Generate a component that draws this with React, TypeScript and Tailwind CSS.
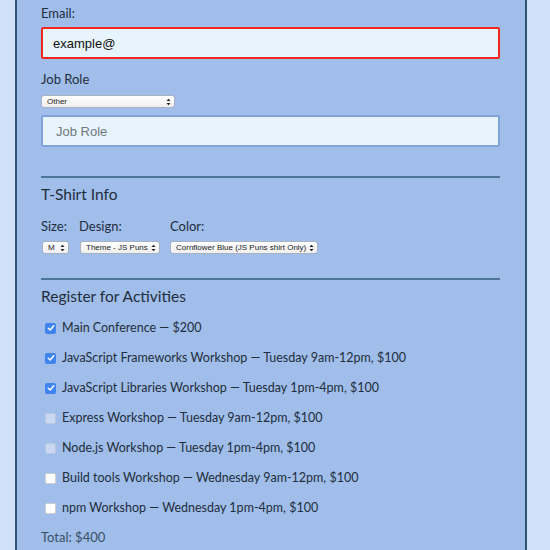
import { useState } from "react";

type Activity = {
  name: string;
  checked: boolean;
  disabled: boolean;
};

const activities: Activity[] = [
  { name: "Main Conference — $200", checked: true, disabled: false },
  { name: "JavaScript Frameworks Workshop — Tuesday 9am-12pm, $100", checked: true, disabled: false },
  { name: "JavaScript Libraries Workshop — Tuesday 1pm-4pm, $100", checked: true, disabled: false },
  { name: "Express Workshop — Tuesday 9am-12pm, $100", checked: false, disabled: true },
  { name: "Node.js Workshop — Tuesday 1pm-4pm, $100", checked: false, disabled: true },
  { name: "Build tools Workshop — Wednesday 9am-12pm, $100", checked: false, disabled: false },
  { name: "npm Workshop — Wednesday 1pm-4pm, $100", checked: false, disabled: false },
];

// little mac-style up/down arrows on the fake selects
const UpDown = () => (
  <svg width="5" height="8" viewBox="0 0 5 8" className="shrink-0">
    <path d="M0.5 3 L2.5 0.8 L4.5 3 Z" fill="#222" />
    <path d="M0.5 5 L2.5 7.2 L4.5 5 Z" fill="#222" />
  </svg>
);

const FakeSelect = ({ value, width }: { value: string; width: string }) => (
  <div
    className={`${width} h-[13px] flex items-center justify-between gap-[2px] pl-[5px] pr-[3px] bg-gradient-to-b from-white to-[#efefef] border border-[#a9b3c0] rounded-[3px] text-[8px] leading-none text-[#222] font-['Liberation_Sans',sans-serif] whitespace-nowrap overflow-hidden`}
  >
    <span>{value}</span>
    <UpDown />
  </div>
);

const Checkbox = ({ checked, disabled }: { checked: boolean; disabled: boolean }) => {
  if (checked) {
    return (
      <span className="w-[11px] h-[11px] rounded-[2px] bg-[#3f84ee] flex items-center justify-center shrink-0">
        <svg width="8" height="8" viewBox="0 0 8 8">
          <path d="M1.3 4.2 L3.2 6 L6.7 1.8" stroke="white" strokeWidth="1.5" fill="none" strokeLinecap="round" strokeLinejoin="round" />
        </svg>
      </span>
    );
  }
  return (
    <span
      className={`w-[11px] h-[11px] rounded-[2px] shrink-0 ${
        disabled ? "bg-[#c9d8f0] border border-[#b6c8e6]" : "bg-white border border-[#d0d0d0]"
      }`}
    />
  );
};

const App = () => {
  const [email, setEmail] = useState("example@");

  return (
    <div className="min-h-screen bg-[#cfe0f8] pl-[15px] font-['Lato',sans-serif]">
      <div className="w-[512px] min-h-[550px] bg-[#a0bee9] border-x-2 border-[#2d5577] pl-[24px] pr-[25px] pt-[4px] text-[#1f2d3d]">
        <label className="block h-[18px] leading-[18px] text-[13px]">Email:</label>
        <input
          value={email}
          onChange={(e) => setEmail(e.target.value)}
          className="mt-[5px] w-full h-[32px] bg-[#e8f4fb] border-2 border-[#f0271c] rounded-[2px] px-[10px] text-[13px] text-[#111] outline-none font-['Liberation_Sans',sans-serif]"
        />

        <label className="block mt-[11px] h-[18px] leading-[18px] text-[13px]">Job Role</label>
        <div className="mt-[7px]">
          <FakeSelect value="Other" width="w-[134px]" />
        </div>
        <input
          placeholder="Job Role"
          className="mt-[7px] w-full h-[32px] bg-[#e8f4fb] border-2 border-[#7fa3da] rounded-[2px] px-[13px] text-[13px] placeholder:text-[#6f7880] outline-none font-['Liberation_Sans',sans-serif]"
        />

        <div className="mt-[29px] h-[2px] bg-[#4e7598]" />

        <h2 className="mt-[7px] h-[18px] leading-[18px] text-[15.5px]">T-Shirt Info</h2>
        <div className="mt-[14px] flex gap-[10px]">
          <div className="flex flex-col">
            <span className="h-[18px] leading-[18px] text-[13px]">Size:</span>
            <div className="mt-[6px] pl-px">
              <FakeSelect value="M" width="w-[27px]" />
            </div>
          </div>
          <div className="flex flex-col">
            <span className="h-[18px] leading-[18px] text-[13px]">Design:</span>
            <div className="mt-[6px] pl-px">
              <FakeSelect value="Theme - JS Puns" width="w-[80px]" />
            </div>
          </div>
          <div className="flex flex-col">
            <span className="h-[18px] leading-[18px] text-[13px]">Color:</span>
            <div className="mt-[6px]">
              <FakeSelect value="Cornflower Blue (JS Puns shirt Only)" width="w-[148px]" />
            </div>
          </div>
        </div>

        <div className="mt-[24px] h-[2px] bg-[#4e7598]" />

        <h2 className="mt-[7px] h-[18px] leading-[18px] text-[15.5px]">Register for Activities</h2>
        <div className="mt-[8px] flex flex-col">
          {activities.map((a) => (
            <label key={a.name} className="h-[30px] flex items-center gap-[6px] pl-[4px] text-[12.5px]">
              <Checkbox checked={a.checked} disabled={a.disabled} />
              <span>{a.name}</span>
            </label>
          ))}
        </div>

        <p className="mt-[5px] h-[18px] leading-[18px] text-[13px] text-[#3a5068]">Total: $400</p>
      </div>
    </div>
  );
};

export default App;
